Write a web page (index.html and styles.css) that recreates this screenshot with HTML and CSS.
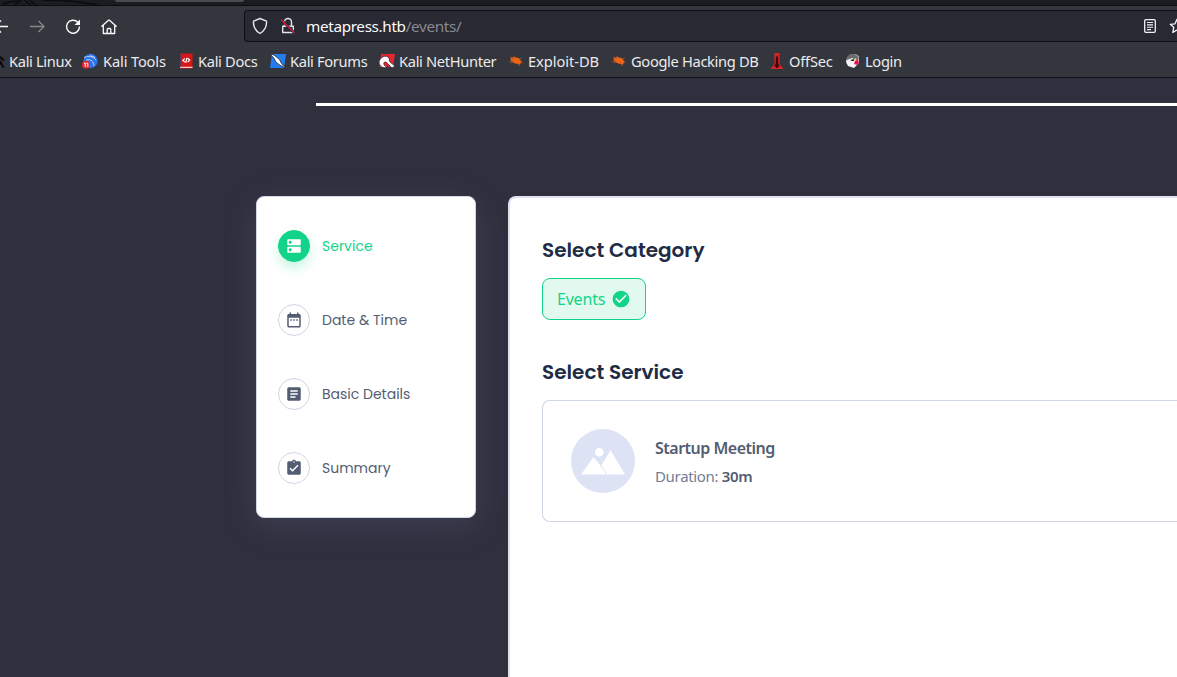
FILE: index.html
```html
<!DOCTYPE html>
<html lang="en">
<head>
<meta charset="utf-8">
<title>Events</title>
<link rel="stylesheet" href="styles.css">
</head>
<body>
<div class="browser">
  <div class="tabstrip">
    <svg class="deco" width="110" height="5" viewBox="0 0 110 5"><path d="M12 5l7-5M27 0l6 5M22 0l6 5M0 4C8 1 12 1 16 1M40 0C60 0 80 2 95 5" fill="none" stroke="#0a0b0e" stroke-width="1.500"/></svg>
    <div class="tab"></div>
  </div>
  <div class="toolbar">
    <div class="nav">
      <svg width="18" height="18" viewBox="0 0 18 18"><path d="M16 8.500H4M9 2.500l-6 6 6 6" fill="none" stroke="#fbfbfe" stroke-width="1.3"/></svg>
      <svg width="18" height="18" viewBox="0 0 18 18"><path d="M2 8.500h14M10.500 3L16 8.500 10.500 14" fill="none" stroke="#85878d" stroke-width="1.3"/></svg>
      <svg width="18" height="18" viewBox="0 0 18 18"><path d="M13.800 4.300A6.500 6.500 0 1 0 15.500 8.600" fill="none" stroke="#fbfbfe" stroke-width="1.400"/><path d="M16 1.500v5.500h-5.500z" fill="#fbfbfe"/></svg>
      <svg width="18" height="18" viewBox="0 0 18 18"><path d="M1.800 8.300L8.500 2.200h1l6.700 6.100M3.300 7.500v8h11.400v-8M7.200 15.500v-4a1 1 0 0 1 1-1h1.600a1 1 0 0 1 1 1v4" fill="none" stroke="#fbfbfe" stroke-width="1.300" stroke-linejoin="round" stroke-linecap="round"/></svg>
    </div>
    <div class="urlbar">
      <svg class="shield" width="16" height="18" viewBox="0 0 16 18"><path d="M8 1.500L14.500 4.200c.3 4.800-1.500 9.300-6.500 12.300C3 13.500 1.200 9 1.500 4.200z" fill="none" stroke="#e4e4e8" stroke-width="1.400" stroke-linejoin="round"/></svg>
      <svg class="lock" width="16" height="18" viewBox="0 0 16 18"><path d="M4.500 9V5a3.500 3.500 0 0 1 7 0v4M2.700 9.200h10.600v6.300H2.700z" fill="none" stroke="#e4e4e8" stroke-width="1.400" stroke-linejoin="round"/><path d="M1 2.500L14.500 16" stroke="#282933" stroke-width="2.500"/><path d="M1 2.500L14.500 16" stroke="#e2173f" stroke-width="1.300"/></svg>
      <span class="url"><b>metapress.htb</b>/events/</span>
      <svg class="reader" width="14" height="16" viewBox="0 0 14 16"><rect x="1.700" y="1.700" width="10.600" height="12.600" rx="1.200" fill="none" stroke="#f0f0f4" stroke-width="1.300"/><path d="M4 4.500h6M4 6.900h6M4 9.300h6M4 11.600h4" stroke="#f0f0f4" stroke-width="1.100"/></svg>
      <svg class="star" width="16" height="16" viewBox="0 0 16 16"><path d="M8 1.300l2 4.500 4.700.5-3.500 3.200 1 4.900L8 12l-4.200 2.400 1-4.900-3.500-3.200 4.700-.5z" fill="none" stroke="#f0f0f4" stroke-width="1.300" stroke-linejoin="round"/></svg>
    </div>
  </div>
  <div class="bookmarks">
    <span class="bm b1"><svg width="16" height="16" viewBox="0 0 16 16"><path d="M3 3c6-1 10 1 12 5M5 7c5-1 8 1 9 8M9 4l6 3M9 8l6 6" fill="none" stroke="#08090b" stroke-width="1.500"/></svg><span>Kali Linux</span></span>
    <span class="bm b2"><svg width="16" height="16" viewBox="0 0 16 16"><circle cx="8.500" cy="8" r="7.200" fill="#2d72e8"/><path d="M2 4.500c5-2 9-1 12 2.500M4 7c6-1 7 1 8 6M8 2.500l5 2" fill="none" stroke="#b5d3ff" stroke-width="1"/><circle cx="4" cy="11.800" r="4" fill="#e8262d"/><path d="M2 10.200h1.300v3.800M4.500 10.200h1.300v3.800" fill="none" stroke="#fff"/></svg><span>Kali Tools</span></span>
    <span class="bm b3"><svg width="16" height="16" viewBox="0 0 16 16"><path d="M2 .5h12.500v15H2z" fill="#d81616"/><path d="M1.500 .5h1.200v14H1.500z" fill="#223f7d"/><path d="M2 13.800h12.500v1H2z" fill="#f4f4f4"/><path d="M6.800 5.500L4.800 7.400l2.200 1.700M9.500 5.200l2.200 1.900-2 1.900M8.800 4.800l-1 5" fill="none" stroke="#fff" stroke-width="1.200"/></svg><span>Kali Docs</span></span>
    <span class="bm b4"><svg width="16" height="16" viewBox="0 0 16 16"><path d="M2 1h14l-2 14H0z" fill="#247df0"/><path d="M0 .8l4 1.200 5.500 4.500 2 4 4 4.700-5.500-3-4-3-2-4z" fill="#fff" stroke="#202733" stroke-width=".8"/></svg><span>Kali Forums</span></span>
    <span class="bm b5"><svg width="16" height="16" viewBox="0 0 16 16"><path d="M2 1h14l-2 13H1z" fill="#e62633"/><path d="M0 9c1-5 7-8 10-4l1 4 5 4-3 2-4-4c-2-3-5-2-4 0 0 2 2 3 4 2-2 3-9 2-9-4z" fill="#fff" stroke="#41222d" stroke-width=".8"/></svg><span>Kali NetHunter</span></span>
    <span class="bm b6"><svg class="bug" width="16" height="16" viewBox="0 0 16 16"><path d="M2.500 5l3-1 5 1 3 3.500-1.500 3-5-1-4-2.500z" fill="#ed6415"/><path d="M1 9l4-1M2 4l4 2M6 3l2 2M11 6l3-1M13 9l2 1M9 10l3 3M5 9l-2 1" stroke="#a95328" stroke-width=".8"/></svg><span>Exploit-DB</span></span>
    <span class="bm b7"><svg class="bug" width="16" height="16" viewBox="0 0 16 16"><path d="M2.500 5l3-1 5 1 3 3.500-1.500 3-5-1-4-2.500z" fill="#ed6415"/><path d="M1 9l4-1M2 4l4 2M6 3l2 2M11 6l3-1M13 9l2 1M9 10l3 3M5 9l-2 1" stroke="#a95328" stroke-width=".8"/></svg><span>Google Hacking DB</span></span>
    <span class="bm b8"><svg width="16" height="16" viewBox="0 0 16 16"><path d="M5.500 0h5v11l4 5H1.500l4-5z" fill="#df2427"/><path d="M8 2l1.200 3v5.500l2 3.500-2-1v2H6.800v-2l-2 1 2-3.500V5z" fill="#42070c"/></svg><span>OffSec</span></span>
    <span class="bm b9"><svg width="16" height="16" viewBox="0 0 16 16"><path d="M2 5c2-5 10-5 12-1v6l-5 5-6-2-2-4z" fill="#f5f5f5"/><path d="M2 5c2-6 11-5 12 1l-3 1-4-2-5 2z" fill="#6a6b6e"/><path d="M5 7l4-1v2H7z" fill="#202125"/><path d="M10 5l1.500 1L9 10z" fill="#f5d849"/><path d="M10 8l3-2 1 4-2 2-3-1z" fill="#e51564"/></svg><span>Login</span></span>
  </div>
</div>
<main class="page">
  <div class="rule"></div>
  <div class="booking">
    <aside class="steps">
      <div class="step active"><span class="dot"><svg width="18" height="18" viewBox="0 0 24 24"><path d="M20 13H4c-.55 0-1 .45-1 1v6c0 .55.45 1 1 1h16c.55 0 1-.45 1-1v-6c0-.55-.45-1-1-1zM7 19c-1.100 0-2-.9-2-2s.9-2 2-2 2 .9 2 2-.9 2-2 2zM20 3H4c-.55 0-1 .45-1 1v6c0 .55.45 1 1 1h16c.55 0 1-.45 1-1V4c0-.55-.45-1-1-1zM7 9c-1.100 0-2-.9-2-2s.9-2 2-2 2 .9 2 2-.9 2-2 2z"/></svg></span><span class="label">Service</span></div>
      <div class="step"><span class="dot"><svg width="18" height="18" viewBox="0 0 24 24"><path d="M19 4h-1V2h-2v2H8V2H6v2H5c-1.110 0-1.990.9-1.990 2L3 20c0 1.100.89 2 2 2h14c1.100 0 2-.9 2-2V6c0-1.100-.9-2-2-2zm0 16H5V9h14v11zM7 11h2v2H7zM11 11h2v2h-2zM15 11h2v2h-2z"/></svg></span><span class="label">Date &amp; Time</span></div>
      <div class="step"><span class="dot"><svg width="18" height="18" viewBox="0 0 24 24"><path d="M19 3H5c-1.100 0-2 .9-2 2v14c0 1.100.9 2 2 2h14c1.100 0 2-.9 2-2V5c0-1.100-.9-2-2-2zm-5 14H7v-2h7v2zm3-4H7v-2h10v2zm0-4H7V7h10v2z"/></svg></span><span class="label">Basic Details</span></div>
      <div class="step"><span class="dot"><svg width="18" height="18" viewBox="0 0 24 24"><path d="M19 3h-4.180C14.400 1.840 13.300 1 12 1s-2.400.84-2.820 2H5c-1.100 0-2 .9-2 2v14c0 1.100.9 2 2 2h14c1.100 0 2-.9 2-2V5c0-1.100-.9-2-2-2zm-7 0c.55 0 1 .45 1 1s-.45 1-1 1-1-.45-1-1 .45-1 1-1zm-2 14l-4-4 1.410-1.410L10 14.170l6.590-6.590L18 9l-8 8z"/></svg></span><span class="label">Summary</span></div>
    </aside>
    <section class="panel">
      <h2 class="heading">Select Category</h2>
      <div class="category"><span>Events</span><svg width="20" height="20" viewBox="0 0 24 24"><path d="M12 2C6.480 2 2 6.480 2 12s4.480 10 10 10 10-4.480 10-10S17.520 2 12 2zm-2 15l-5-5 1.410-1.410L10 14.170l7.590-7.590L19 8l-9 9z" fill="#12d488"/></svg></div>
      <h2 class="heading second">Select Service</h2>
      <div class="service">
        <svg width="64" height="64" viewBox="0 0 64 64"><circle cx="32" cy="32" r="32" fill="#dde3f5"/><circle cx="28.300" cy="23.300" r="4.300" fill="#fff"/><path d="M10 45.500L22.500 28l7.500 9L39.500 21 54 45.500z" fill="#fff"/><path d="M29.500 36.500l6.500 9" stroke="#dde3f5"/></svg>
        <div class="info"><div class="name">Startup Meeting</div><div class="duration">Duration: <b>30m</b></div></div>
      </div>
    </section>
  </div>
</main>
</body>
</html>
```

FILE: styles.css
```css
* { box-sizing: border-box; }
body { margin: 0; width: 100%; height: 100vh; overflow: hidden; background: #2f303e; font-family: "Noto Sans", sans-serif; display: flex; flex-direction: column; }
svg { flex: none; display: block; }
b { font-weight: inherit; }
.browser { height: 78px; flex: none; background: #34363d; border-bottom: 1px solid #101116; overflow: hidden; }
.tabstrip { height: 6px; background: #1b1c21; border-bottom: 1px solid #0c0d12; display: flex; }
.deco { width: 115px; }
.tab { width: 129px; height: 2px; background: #494b51; border-radius: 0 0 3px 3px; }
.toolbar { height: 41px; display: flex; align-items: center; }
.nav { width: 244px; flex: none; display: flex; gap: 18px; margin-left: -8px; margin-right: 8px; }
.urlbar { flex: 1; min-width: 0; height: 32px; margin-top: -1px; background: #282933; border: 1px solid #0d0e13; border-right: 0; border-radius: 4px 0 0 4px; display: flex; align-items: center; padding-left: 7px; overflow: hidden; }
.lock { margin-left: 12px; }
.url { width: 837px; flex: none; margin-left: 10px; font-size: 15.3px; letter-spacing: -.35px; color: #888991; white-space: nowrap; }
.url b { color: #fbfbfe; }
.star { margin-left: 12px; }
.bookmarks { height: 28px; display: flex; align-items: center; margin-left: -11px; }
.bm { flex: none; display: flex; align-items: center; gap: 4px; font-size: 14.67px; letter-spacing: -.33px; color: #ebebef; white-space: nowrap; }
.b1 { width: 93px; } .b2 { width: 96px; letter-spacing: -.15px; } .b3 { width: 92px; } .b4 { width: 109px; } .b5 { width: 129px; }
.b2 { gap: 5px; }
.b6 { width: 103px; letter-spacing: -.05px; } .b7 { width: 158px; } .b8 { width: 76px; letter-spacing: -.2px; }
.page { flex: 1; min-height: 0; display: flex; flex-direction: column; }
.rule { height: 3px; flex: none; margin: 25px 0 0 316px; background: #fff; }
.booking { flex: 1; min-height: 0; display: flex; align-items: flex-start; margin: 90px 0 0 256px; gap: 32px; }
.steps { width: 220px; height: 322px; flex: none; background: #fff; border: 1px solid #cfd6e5; border-radius: 8px; padding: 33px 21px; display: flex; flex-direction: column; gap: 42px; box-shadow: 0 8px 32px rgba(120,116,155,.22); }
.step { display: flex; align-items: center; gap: 12px; height: 32px; color: #535d71; }
.dot { width: 32px; height: 32px; flex: none; border: 1px solid #cfd6e5; border-radius: 50%; display: grid; place-items: center; }
.dot svg { fill: #535d71; }
.active { color: #12d488; }
.active .dot { background: #12d488; border-color: #12d488; box-shadow: 0 6px 12px rgba(18,212,136,.24); }
.active svg { fill: #fff; }
.label { font-family: Poppins, Inter, sans-serif; font-size: 14px; white-space: nowrap; }
.panel { flex: 1; min-width: 0; height: 100%; background: #fff; border: 2px solid #dde3f5; border-width: 2px 0 0 2px; border-radius: 8px 0 0 0; padding: 37px 0 0 32px; }
.heading { margin: 0; height: 30px; font: 600 20px/30px Poppins, Inter, sans-serif; color: #202c45; }
.category { width: 104px; height: 42px; margin-top: 13px; border: 1px solid #12d488; border-radius: 8px; background: #e2f9f0; color: #12d488; font-size: 16px; letter-spacing: -.2px; display: flex; align-items: center; padding-left: 14px; gap: 6px; }
.category svg { margin-left: auto; margin-right: 14px; }
.second { margin-top: 37px; }
.service { height: 122px; margin-top: 13px; border: 1px solid #cfd6e5; border-right: 0; border-radius: 8px 0 0 8px; padding: 28px; display: flex; gap: 20px; }
.info { padding-top: 5px; color: #535d71; white-space: nowrap; }
.name { font-size: 16px; letter-spacing: -.5px; font-weight: 600; line-height: 28px; }
.duration { font-size: 15px; letter-spacing: -.33px; line-height: 28px; color: #727e95; }
.duration b { font-weight: 600; color: #535d71; }
```
